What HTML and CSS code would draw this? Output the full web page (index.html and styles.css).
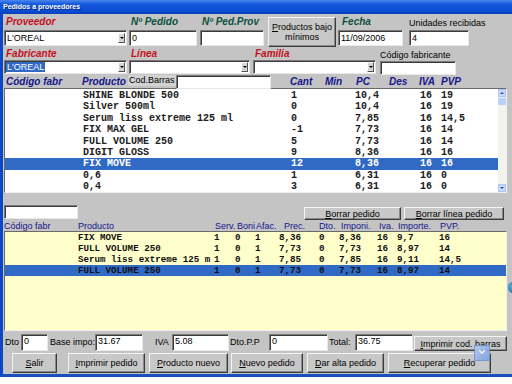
FILE: index.html
```html
<!DOCTYPE html>
<html lang="es">
<head>
    <meta charset="UTF-8">
    <meta name="viewport" content="width=device-width, initial-scale=1.0">
    <title>Pedidos a proveedores</title>
    <link rel="stylesheet" href="styles.css">
</head>
<body>
    <div class="ventana">
        <div class="titulo">Pedidos a proveedores</div>
        <div class="cuerpo">
            <!-- proveedor / pedido / fecha -->
            <div class="fila1">
                <div class="campo-grupo f-prov">
                    <span class="etq rojo">Proveedor</span>
                    <div class="caja combo"><span>L'OREAL</span><i class="flecha"></i></div>
                </div>
                <div class="campo-grupo f-ped">
                    <span class="etq verde">Nº Pedido</span>
                    <div class="caja">0</div>
                </div>
                <div class="campo-grupo f-pedprov">
                    <span class="etq verde">Nº Ped.Prov</span>
                    <div class="caja"></div>
                </div>
                <div class="boton btn-bajo"><span><u>P</u>roductos bajo<br>mínimos</span></div>
                <div class="campo-grupo f-fecha">
                    <span class="etq verde">Fecha</span>
                    <div class="caja">11/09/2006</div>
                </div>
                <div class="campo-grupo f-unid">
                    <span class="etq-normal">Unidades recibidas</span>
                    <div class="caja">4</div>
                </div>
            </div>
            <!-- fabricante / linea / familia -->
            <div class="fila2">
                <div class="campo-grupo f-fab">
                    <span class="etq rojo">Fabricante</span>
                    <div class="caja combo"><span class="sel">L'OREAL</span><i class="flecha"></i></div>
                </div>
                <div class="campo-grupo f-lin">
                    <span class="etq rojo">Línea</span>
                    <div class="caja combo"><span></span><i class="flecha"></i></div>
                </div>
                <div class="campo-grupo f-fam">
                    <span class="etq rojo">Familia</span>
                    <div class="caja combo"><span></span><i class="flecha"></i></div>
                </div>
                <div class="campo-grupo f-codfab">
                    <span class="etq-normal">Código fabricante</span>
                    <div class="caja"></div>
                </div>
            </div>
            <div class="cabecera1">
                <span class="c1-cod">Código fabr</span>
                <span class="c1-prod">Producto</span>
                <span class="c1-barras">Cod.Barras</span>
                <div class="caja c1-input"></div>
                <span class="c1-cant">Cant</span>
                <span class="c1-min">Min</span>
                <span class="c1-pc">PC</span>
                <span class="c1-des">Des</span>
                <span class="c1-iva">IVA</span>
                <span class="c1-pvp">PVP</span>
            </div>
            <div class="lista1">
                <div class="filas1">
                    <div class="fila-p"><span></span><span>SHINE BLONDE 500</span><span>1</span><span>10,4</span><span>16</span><span>19</span></div>
                    <div class="fila-p"><span></span><span>Silver 500ml</span><span>0</span><span>10,4</span><span>16</span><span>19</span></div>
                    <div class="fila-p"><span></span><span>Serum liss extreme 125 ml</span><span>0</span><span>7,85</span><span>16</span><span>14,5</span></div>
                    <div class="fila-p"><span></span><span>FIX MAX GEL</span><span>-1</span><span>7,73</span><span>16</span><span>14</span></div>
                    <div class="fila-p"><span></span><span>FULL VOLUME 250</span><span>5</span><span>7,73</span><span>16</span><span>14</span></div>
                    <div class="fila-p"><span></span><span>DIGIT GLOSS</span><span>9</span><span>8,36</span><span>16</span><span>16</span></div>
                    <div class="fila-p activa"><span></span><span>FIX MOVE</span><span>12</span><span>8,36</span><span>16</span><span>16</span></div>
                    <div class="fila-p"><span></span><span>0,6</span><span>1</span><span>6,31</span><span>16</span><span>0</span></div>
                    <div class="fila-p"><span></span><span>0,4</span><span>3</span><span>6,31</span><span>16</span><span>0</span></div>
                </div>
                <div class="scroll">
                    <div class="sc-btn"><i class="sc-up"></i></div>
                    <div class="sc-thumb"></div>
                    <div class="sc-track"></div>
                    <div class="sc-btn"><i class="sc-down"></i></div>
                </div>
            </div>
            <div class="barra2">
                <div class="caja b2-input"></div>
                <div class="boton b2-borrar"><span><u>B</u>orrar pedido</span></div>
                <div class="boton b2-linea"><span><u>B</u>orrar línea pedido</span></div>
            </div>
            <div class="cabecera2">
                <span>Código fabr</span><span>Producto</span><span>Serv.</span><span>Boni</span><span>Afac.</span><span>Prec.</span><span>Dto.</span><span>Imponi.</span><span>Iva.</span><span>Importe.</span><span>PVP.</span>
            </div>
            <div class="lista2">
                <div class="fila-d"><span></span><span>FIX MOVE</span><span>1</span><span>0</span><span>1</span><span>8,36</span><span>0</span><span>8,36</span><span>16</span><span>9,7</span><span>16</span></div>
                <div class="fila-d"><span></span><span>FULL VOLUME 250</span><span>1</span><span>0</span><span>1</span><span>7,73</span><span>0</span><span>7,73</span><span>16</span><span>8,97</span><span>14</span></div>
                <div class="fila-d"><span></span><span>Serum liss extreme 125 m</span><span>1</span><span>0</span><span>1</span><span>7,85</span><span>0</span><span>7,85</span><span>16</span><span>9,11</span><span>14,5</span></div>
                <div class="fila-d activa"><span></span><span>FULL VOLUME 250</span><span>1</span><span>0</span><span>1</span><span>7,73</span><span>0</span><span>7,73</span><span>16</span><span>8,97</span><span>14</span></div>
            </div>
            <!-- totales -->
            <div class="totales">
                <span class="t-dto">Dto</span>
                <div class="caja t-in1">0</div>
                <span class="t-base">Base impo:</span>
                <div class="caja t-in2">31.67</div>
                <span class="t-iva">IVA</span>
                <div class="caja t-in3">5.08</div>
                <span class="t-dpp">Dto.P.P</span>
                <div class="caja t-in4">0</div>
                <span class="t-total">Total:</span>
                <div class="caja t-in5">36.75</div>
                <div class="boton t-cod"><span><u>I</u>mprimir cod. barras</span></div>
            </div>
            <div class="botones">
                <div class="boton bt-salir"><span><u>S</u>alir</span></div>
                <div class="boton bt-impr"><span><u>I</u>mprimir pedido</span></div>
                <div class="boton bt-prod"><span><u>P</u>roducto nuevo</span></div>
                <div class="boton bt-nuevo"><span><u>N</u>uevo pedido</span></div>
                <div class="boton bt-alta"><span><u>D</u>ar alta pedido</span></div>
                <div class="boton bt-recup"><span><u>R</u>ecuperar pedido</span></div>
            </div>
        </div>
        <div class="icono-flotante">
            <svg width="16" height="16" viewBox="0 0 16 16">
                <path d="M5 5 L8 8 L11 5" fill="none" stroke="#ffffff" stroke-width="1.4"/>
            </svg>
        </div>
        <div class="bola"></div>
    </div>
</body>
</html>
```

FILE: styles.css
```css
/* ventana estilo XP */
body{
    margin: 0;
    background: #ffffff;
    width: 512px;
    height: 384px;
    overflow: hidden;
    font-family: "Liberation Sans", Arial, sans-serif;
}
.ventana{
    position: relative;
    width: 509px;
    border-left: 3px solid #0c47c8;
    border-bottom: 3px solid #1a4fc0;
}
.titulo{
    height: 14px;
    line-height: 14px;
    margin-left: -3px;
    padding-left: 3px;
    background: linear-gradient(#4a86ee, #1458dc 30%, #0a4cd2 80%, #083fb4);
    color: #ffffff;
    font-size: 7px;
    font-weight: bold;
    text-shadow: 1px 1px 0 #0a2a80;
}
.cuerpo{
    height: 360px;
    background: #c4c4c4;
}

/* controles comunes */
.caja{
    box-sizing: border-box;
    background: #ffffff;
    border: 1px solid;
    border-color: #7a7a7a #e8e8e8 #e8e8e8 #7a7a7a;
    box-shadow: inset 1px 1px 0 #3c3c3c;
    font-size: 9px;
    padding-left: 2px;
    display: flex;
    align-items: center;
    color: #000;
}
.combo{
    justify-content: space-between;
    padding-right: 1px;
}
.combo .sel{
    background: #316ac5;
    color: #ffffff;
    margin-left: -1px;
    padding: 0 1px;
}
.flecha{
    width: 7px;
    height: 10px;
    box-sizing: border-box;
    background: #d4d4d4;
    border: 1px solid;
    border-color: #ffffff #555 #555 #ffffff;
    position: relative;
}
.flecha::after{
    content: '';
    position: absolute;
    left: 1px;
    top: 3px;
    border-left: 2px solid transparent;
    border-right: 2px solid transparent;
    border-top: 2px solid #000;
}
.boton{
    box-sizing: border-box;
    background: #c8c8c8;
    border: 1px solid;
    border-color: #f4f4f4 #3c3c3c #3c3c3c #f4f4f4;
    box-shadow: inset -1px -1px 0 #8a8a8a;
    font-size: 9px;
    color: #000;
    display: flex;
    align-items: center;
    justify-content: center;
    text-align: center;
    line-height: 10px;
}
.campo-grupo{
    display: flex;
    flex-direction: column;
}
.etq{
    font-size: 10px;
    font-weight: bold;
    font-style: italic;
    padding-left: 2px;
    white-space: nowrap;
}
.rojo{ color: #c4101c; }
.verde{ color: #0c5040; }
.etq-normal{
    font-size: 9px;
    color: #000;
    white-space: nowrap;
}

/* fila 1 */
.fila1{
    display: flex;
    height: 33px;
}
.fila1 .etq{ height: 16px; line-height: 16px; }
.fila1 .caja{ height: 16px; }
.f-prov{ margin-left: 1px; width: 123px; }
.f-ped{ margin-left: 2px; width: 68px; }
.f-pedprov{ margin-left: 3px; width: 64px; }
.btn-bajo{ margin-left: 4px; width: 68px; height: 30px; margin-top: 3px; }
.f-fecha{ margin-left: 2px; width: 65px; }
.f-fecha .etq{ padding-left: 4px; }
.f-unid{ margin-left: 6px; width: 60px; }
.f-unid .etq-normal{ height: 16px; line-height: 18px; }

/* fila 2 */
.fila2{
    display: flex;
    height: 28px;
}
.fila2 .etq{ height: 13px; line-height: 14px; }
.fila2 .caja{ height: 14px; }
.f-fab{ margin-left: 1px; width: 123px; }
.f-lin{ margin-left: 2px; width: 121px; }
.f-fam{ margin-left: 3px; width: 123px; }
.f-codfab{ margin-left: 4px; width: 76px; }
.f-codfab .etq-normal{ height: 14px; line-height: 14px; padding-top: 1px; box-sizing: border-box; }

/* cabecera lista superior */
.cabecera1{
    display: flex;
    height: 13px;
    font-size: 10px;
    font-weight: bold;
    font-style: italic;
    color: #14148c;
    line-height: 13px;
    white-space: nowrap;
}
.c1-cod{ margin-left: 3px; width: 76px; }
.c1-prod{ width: 46px; }
.c1-barras{
    width: 48px;
    height: 11px;
    line-height: 11px;
    font-size: 9px;
    font-weight: normal;
    font-style: normal;
    color: #000;
    background: #d2d2d2;
    padding-left: 1px;
    box-sizing: border-box;
}
.c1-input{ width: 95px; height: 14px; }
.c1-cant{ margin-left: 19px; width: 35px; }
.c1-min{ width: 31px; }
.c1-pc{ width: 33px; }
.c1-des{ width: 30px; }
.c1-iva{ width: 22px; }

/* lista superior */
.lista1{
    margin-left: 1px;
    width: 503px;
    height: 105px;
    box-sizing: border-box;
    background: #ffffff;
    border: 1px solid;
    border-color: #6a6a6a #f0f0f0 #f0f0f0 #6a6a6a;
    display: flex;
}
.filas1{
    flex: 1;
    padding-top: 1px;
}
.fila-p{
    display: grid;
    grid-template-columns: 78px 208px 64px 65px 21px 1fr;
    height: 11.4px;
    line-height: 11.4px;
    font-family: "Liberation Mono", "Courier New", monospace;
    font-size: 10px;
    font-weight: bold;
    color: #202020;
    white-space: nowrap;
}
.activa{
    background: #316ac5;
    color: #ffffff;
}
.scroll{
    width: 8px;
    display: flex;
    flex-direction: column;
    background: #f2f2ee;
}
.sc-btn{
    height: 8px;
    background: #c9d8f6;
    border: 1px solid #b0c4ee;
    box-sizing: border-box;
    position: relative;
}
.sc-up, .sc-down{
    position: absolute;
    left: 1px;
    top: 2px;
    border-left: 2px solid transparent;
    border-right: 2px solid transparent;
}
.sc-up{ border-bottom: 2px solid #3050a0; }
.sc-down{ border-top: 2px solid #3050a0; }
.sc-thumb{
    height: 7px;
    background: #bcd0f4;
    margin-top: 1px;
}
.sc-track{ flex: 1; }

/* botones de borrado */
.barra2{
    display: flex;
    height: 15px;
    margin-top: 12px;
}
.b2-input{ margin-left: 1px; width: 74px; height: 14px; }
.b2-borrar{ margin-left: 226px; width: 97px; height: 13px; margin-top: 2px; }
.b2-linea{ margin-left: 3px; width: 100px; height: 13px; margin-top: 2px; }

/* cabecera lista inferior */
.cabecera2{
    display: grid;
    grid-template-columns: 74px 137px 22px 19px 28px 35px 22px 38px 19px 42px 1fr;
    margin-left: 1px;
    height: 11px;
    line-height: 12px;
    font-size: 9px;
    color: #14148c;
    white-space: nowrap;
}

/* lista inferior (lineas de pedido) */
.lista2{
    margin-left: 1px;
    width: 503px;
    height: 100px;
    box-sizing: border-box;
    background: #ffffcc;
    border: 1px solid;
    border-color: #6a6a6a #f0f0f0 #f0f0f0 #6a6a6a;
}
.fila-d{
    display: grid;
    grid-template-columns: 73px 136px 21px 20px 24px 40px 20px 38px 20px 42px 1fr;
    height: 11px;
    line-height: 11px;
    font-family: "Liberation Mono", "Courier New", monospace;
    font-size: 9.2px;
    font-weight: bold;
    color: #101010;
    white-space: nowrap;
}

/* totales */
.totales{
    display: flex;
    height: 17px;
    margin-top: 3px;
    font-size: 9px;
    line-height: 17px;
    white-space: nowrap;
}
.totales .caja{ height: 17px; align-items: flex-start; line-height: 12px; }
.t-dto{ margin-left: 2px; width: 16px; }
.t-in1{ width: 27px; }
.t-base{ margin-left: 2px; width: 45px; }
.t-in2{ width: 48px; }
.t-iva{ margin-left: 12px; width: 17px; }
.t-in3{ width: 57px; }
.t-dpp{ margin-left: 1px; width: 39px; }
.t-in4{ width: 59px; }
.t-total{ margin-left: 1px; width: 26px; }
.t-in5{ width: 58px; }
.t-cod{ margin-left: 1px; width: 93px; height: 15px; margin-top: 2px; }

/* botones inferiores */
.botones{
    display: flex;
    height: 20px;
    margin-top: 2px;
}
.botones .boton{ height: 20px; }
.bt-salir{ margin-left: 9px; width: 45px; }
.bt-impr{ margin-left: 11px; width: 77px; }
.bt-prod{ margin-left: 4px; width: 79px; }
.bt-nuevo{ margin-left: 3px; width: 72px; }
.bt-alta{ margin-left: 4px; width: 77px; }
.bt-recup{ margin-left: 4px; width: 103px; }

/* elementos flotantes sobre la ventana */
.icono-flotante{
    position: absolute;
    left: 471px;
    top: 345px;
    width: 16px;
    height: 16px;
    background: linear-gradient(135deg, #b4ccf2, #7a9fe0);
    border: 1px solid #6f92d0;
    box-sizing: border-box;
    opacity: 0.9;
}
.icono-flotante svg{ display: block; margin: -1px; }
.bola{
    position: absolute;
    left: 505px;
    top: 282px;
    width: 10px;
    height: 11px;
    border-radius: 50%;
    background: radial-gradient(circle at 40% 40%, #5fb0d0, #1c5c9c);
}
```
